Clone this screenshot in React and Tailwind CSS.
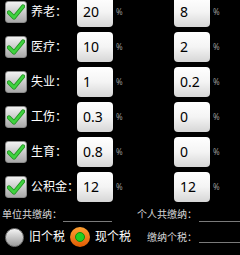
import React from 'react';

const rows = [
    { name: '养老：', a: '20', b: '8' },
    { name: '医疗：', a: '10', b: '2' },
    { name: '失业：', a: '1', b: '0.2' },
    { name: '工伤：', a: '0.3', b: '0' },
    { name: '生育：', a: '0.8', b: '0' },
    { name: '公积金：', a: '12', b: '12' },
];

function Check() {
    return (
        <div className="w-[22px] h-[22px] rounded-[3px] border border-[#8a8a8a] bg-gradient-to-b from-[#f2f2f2] to-[#a9a9a9] flex items-center justify-center">
            <svg width="18" height="16" viewBox="0 0 18 16">
                <path d="M2 8.5 L7 13.5 L16 2.5" fill="none" stroke="#1f8f1f" strokeWidth="4.2" strokeLinecap="round" strokeLinejoin="round" />
                <path d="M2 8.5 L7 13.5 L16 2.5" fill="none" stroke="#3fd23f" strokeWidth="2.6" strokeLinecap="round" strokeLinejoin="round" />
            </svg>
        </div>
    );
}

function Field({ value }) {
    return (
        <div className="w-[36px] h-[30px] rounded-[4px] bg-gradient-to-b from-[#ffffff] via-[#f4f4f4] to-[#d6d6d6] flex items-center pl-[6px] text-[14px] text-black leading-none">
            {value}
        </div>
    );
}

export default function App() {
    return (
        <div className="w-[240px] h-[255px] bg-black overflow-hidden text-white" style={{ fontFamily: '"Noto Sans", "Noto Sans CJK SC", sans-serif' }}>
            <div className="-mt-[3px]">
                {rows.map(r => (
                    <div key={r.name} className="flex items-center h-[30px] mb-[5px]">
                        <div className="ml-[5px]"><Check /></div>
                        <div className="ml-[4px] w-[46px] text-[12px] leading-none text-white whitespace-nowrap">{r.name}</div>
                        <Field value={r.a} />
                        <div className="ml-[3px] w-[58px] text-[8px] text-[#9a9a9a]">%</div>
                        <Field value={r.b} />
                        <div className="ml-[3px] text-[8px] text-[#9a9a9a]">%</div>
                    </div>
                ))}
            </div>

            <div className="flex items-end h-[17px] -mt-[2px] text-[10px] text-[#d8d8d8] leading-none">
                <span className="ml-[2px] mb-[3px]">单位共缴纳：</span>
                <div className="ml-[1px] w-[49px] border-b border-[#7a7a7a]" />
                <span className="ml-[25px] mb-[3px]">个人共缴纳：</span>
                <div className="ml-[2px] flex-1 border-b border-[#7a7a7a]" />
            </div>

            <div className="flex items-center h-[26px] mt-[2px] text-[12px] leading-none">
                <div className="ml-[5px] w-[19px] h-[19px] rounded-full border border-[#777] bg-gradient-to-b from-[#f4f4f4] to-[#9c9c9c]" />
                <span className="ml-[5px] text-white">旧个税</span>
                <div className="ml-[5px] w-[20px] h-[20px] rounded-full bg-gradient-to-b from-[#ffa030] to-[#e05a00] flex items-center justify-center">
                    <div className="w-[10px] h-[10px] rounded-full bg-[#22d022] border border-[#0c8f0c]" />
                </div>
                <span className="ml-[5px] text-white">现个税</span>
                <span className="ml-[16px] text-[10px] text-[#d8d8d8]">缴纳个税：</span>
                <div className="ml-[2px] flex-1 self-end mb-[7px] border-b border-[#7a7a7a]" />
            </div>
        </div>
    );
}
